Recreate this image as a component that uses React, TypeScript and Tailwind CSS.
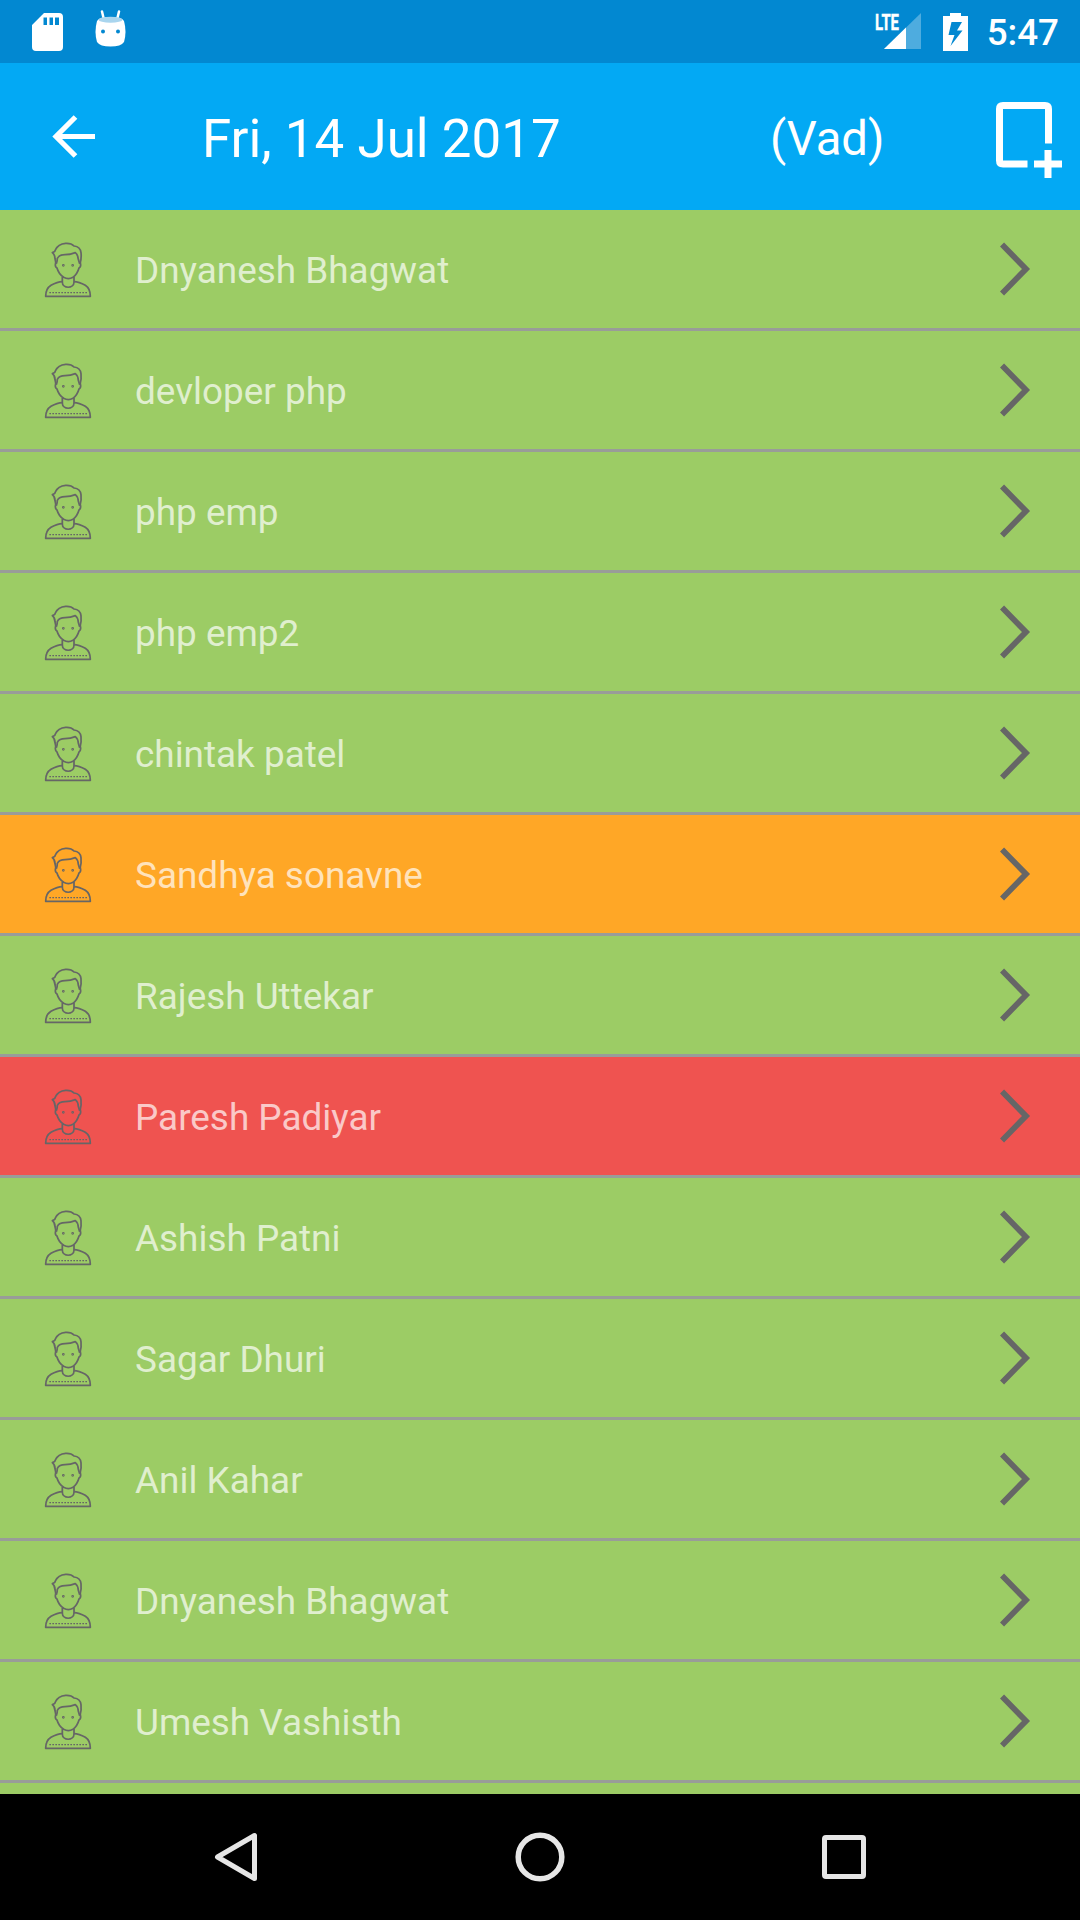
import React from "react";
import clsx from "clsx";

type Status = "present" | "late" | "absent";

interface Employee {
  name: string;
  status: Status;
}

const employees: Employee[] = [
  { name: "Dnyanesh Bhagwat", status: "present" },
  { name: "devloper php", status: "present" },
  { name: "php emp", status: "present" },
  { name: "php emp2", status: "present" },
  { name: "chintak patel", status: "present" },
  { name: "Sandhya sonavne", status: "late" },
  { name: "Rajesh Uttekar", status: "present" },
  { name: "Paresh Padiyar", status: "absent" },
  { name: "Ashish Patni", status: "present" },
  { name: "Sagar Dhuri", status: "present" },
  { name: "Anil Kahar", status: "present" },
  { name: "Dnyanesh Bhagwat", status: "present" },
  { name: "Umesh Vashisth", status: "present" },
];

const rowColors: Record<Status, string> = {
  present: "bg-[#9ccc65]",
  late: "bg-[#ffa726]",
  absent: "bg-[#ef5350]",
};

const PersonIcon: React.FC = () => (
  <svg
    className="h-[57px] w-[52px] shrink-0"
    viewBox="36 45 156 171"
    fill="none"
    stroke="#666666"
    strokeWidth="5.2"
    strokeLinejoin="round"
  >
    {/* Hair */}
    <path d="M78 113 L75 98 Q75 86 67 80 Q76 77 76 72 Q84 54 107 52 Q124 51 132 60 Q151 62 153 80 Q155 97 150 113" />
    <path d="M79 113 Q82 106 82 97 Q88 86 105 86 Q122 86 136 80 Q144 86 145 100 L149 113" />
    {/* Face */}
    <path d="M77 110 Q74 122 81 126 Q86 144 101 154 Q115 162 129 154 Q142 144 147 126 Q154 122 151 110" />
    <circle cx="100" cy="118" r="1.5" />
    <circle cx="128" cy="118" r="1.5" />
    {/* Neck and shoulders */}
    <path d="M97 153 V168 C97 189 132 189 132 168 V153" />
    <path d="M97 167 Q82 167 63 178 Q47 188 47 211 H181 Q181 188 166 178 Q147 167 132 167" />
    <path d="M58 200 H173" strokeDasharray="5 4" strokeWidth="4" />
  </svg>
);

const ChevronIcon: React.FC = () => (
  <svg className="h-14 w-8 shrink-0" viewBox="0 0 32 56" fill="none" stroke="#666666" strokeWidth="5.8">
    <path d="M2 3.500 L26 28 L2 52.500" />
  </svg>
);

const StatusBar: React.FC = () => (
  <div className="flex h-[63px] shrink-0 items-center bg-[#0288d1] pr-[21px] pl-8 text-white">
    {/* SD card */}
    <svg className="h-[38px] w-[31px]" viewBox="0 0 31 38">
      <path
        fill="currentColor"
        fillRule="evenodd"
        d="M12 0 H27 Q31 0 31 4 V34 Q31 38 27 38 H4 Q0 38 0 34 V12 Z M11.500 4.500 V12 H15 V4.500 Z M17.500 4.500 V12 H21 V4.500 Z M23 4.500 V12 H27 V4.500 Z"
      />
    </svg>
    {/* Android head */}
    <svg className="mb-1.5 ml-8 h-[37px] w-[31px]" viewBox="0 0 31 37">
      <path d="M7 1.500 L9 10 M24 1.500 L22 10" stroke="currentColor" strokeWidth="2.5" strokeLinecap="round" />
      <path fill="currentColor" d="M2 11 Q4 7 15.500 7 Q27 7 29 11 Q32 22 29 32 Q26 36.500 15.500 36.500 Q5 36.500 2 32 Q-1 22 2 11 Z" />
      <ellipse cx="15.500" cy="9.700" rx="12" ry="3" fill="#a9d5ee" />
      <circle cx="8" cy="21.500" r="2" fill="#0288d1" />
      <circle cx="23" cy="21.500" r="2" fill="#0288d1" />
    </svg>
    <div className="ml-auto flex items-center">
      {/* Mobile signal */}
      <svg className="h-[61px] w-[46px]" viewBox="0 -12 46 61">
        <path d="M46 0 V36 H9 Z" fill="#fff" fillOpacity="0.3" />
        <path d="M31 14.500 V36 H9 Z" fill="#fff" />
        <path d="M0 0 H27 V14 L23 18 H0 Z" fill="#0288d1" />
        <text
          x="0"
          y="16.5"
          fontFamily="Roboto, sans-serif"
          fontSize="22"
          fontWeight="700"
          fill="#fff"
          stroke="#fff"
          strokeWidth="0.4"
          textLength="24"
          lengthAdjust="spacingAndGlyphs"
        >
          LTE
        </text>
      </svg>
      {/* Charging battery */}
      <svg className="ml-[22px] h-[38px] w-[25px]" viewBox="0 0 25 38">
        <path
          fill="currentColor"
          fillRule="evenodd"
          d="M7 0 H18 V3 H25 V38 H0 V3 H7 Z M8.500 9 L5.500 22 H11.500 L7.500 33 L19.500 17.500 H14 L19 9 Z"
        />
      </svg>
      <span className="mt-[3px] ml-[19px] text-[36.75px] leading-[60px] font-medium">5:47</span>
    </div>
  </div>
);

const Toolbar: React.FC = () => (
  <header className="flex h-[147px] shrink-0 items-center bg-[#03a9f4] text-white">
    <button className="ml-[52px] h-11 w-11" aria-label="Back">
      <svg viewBox="0 0 44 44" fill="none" stroke="currentColor" strokeWidth="5.200">
        <path d="M43 21.500 H4 M23.500 2 L4 21.500 L23.500 41" />
      </svg>
    </button>
    <h1 className="mt-1 ml-[106px] w-[568px] text-[52.9px] leading-[62px] whitespace-nowrap">Fri, 14 Jul 2017</h1>
    <span className="mt-1 w-[225px] text-[47.25px] leading-[56px]">(Vad)</span>
    <button className="mt-1.5 h-[78px] w-[68px]" aria-label="Add note">
      <svg viewBox="0 0 68 78" fill="none" stroke="currentColor" strokeWidth="7">
        <path d="M32.500 63 H8 Q4.500 63 4.500 59.500 V8 Q4.500 4.500 8 4.500 H50 Q53.500 4.500 53.500 8 V42.500" />
        <path d="M39 63 H67 M53 49 V77" />
      </svg>
    </button>
  </header>
);

const NavigationBar: React.FC = () => (
  <nav className="flex h-[126px] shrink-0 items-center justify-between bg-black pr-[214px] pl-[213px]">
    <svg className="h-[50px] w-[46px]" viewBox="0 0 46 50" fill="none" stroke="#e6e6e6" strokeWidth="5" strokeLinejoin="round">
      <path d="M41.500 3.500 V46.500 L4.500 25 Z" />
    </svg>
    <svg className="mr-0.5 h-[50px] w-[50px]" viewBox="0 0 50 50" fill="none" stroke="#e6e6e6" strokeWidth="5.500">
      <circle cx="25" cy="25" r="21.800" />
    </svg>
    <div className="h-11 w-11 rounded-[4px] border-[5px] border-[#e6e6e6]" />
  </nav>
);

export default function App() {
  return (
    <div className="flex h-[1920px] w-[1080px] flex-col overflow-hidden font-['Roboto',sans-serif]">
      <StatusBar />
      <Toolbar />
      <ul className="min-h-0 flex-1 overflow-hidden bg-[#9ccc65]">
        {employees.map((employee, index) => (
          <li
            key={index}
            className={clsx(
              "flex h-[121px] items-center border-b-[3px] border-[#999c99] pr-[48px] pl-[42px]",
              rowColors[employee.status],
            )}
          >
            <PersonIcon />
            <span className="mt-[3px] ml-[41px] flex-1 text-[36.9px] leading-[44px] text-white/70">{employee.name}</span>
            <ChevronIcon />
          </li>
        ))}
      </ul>
      <NavigationBar />
    </div>
  );
}
